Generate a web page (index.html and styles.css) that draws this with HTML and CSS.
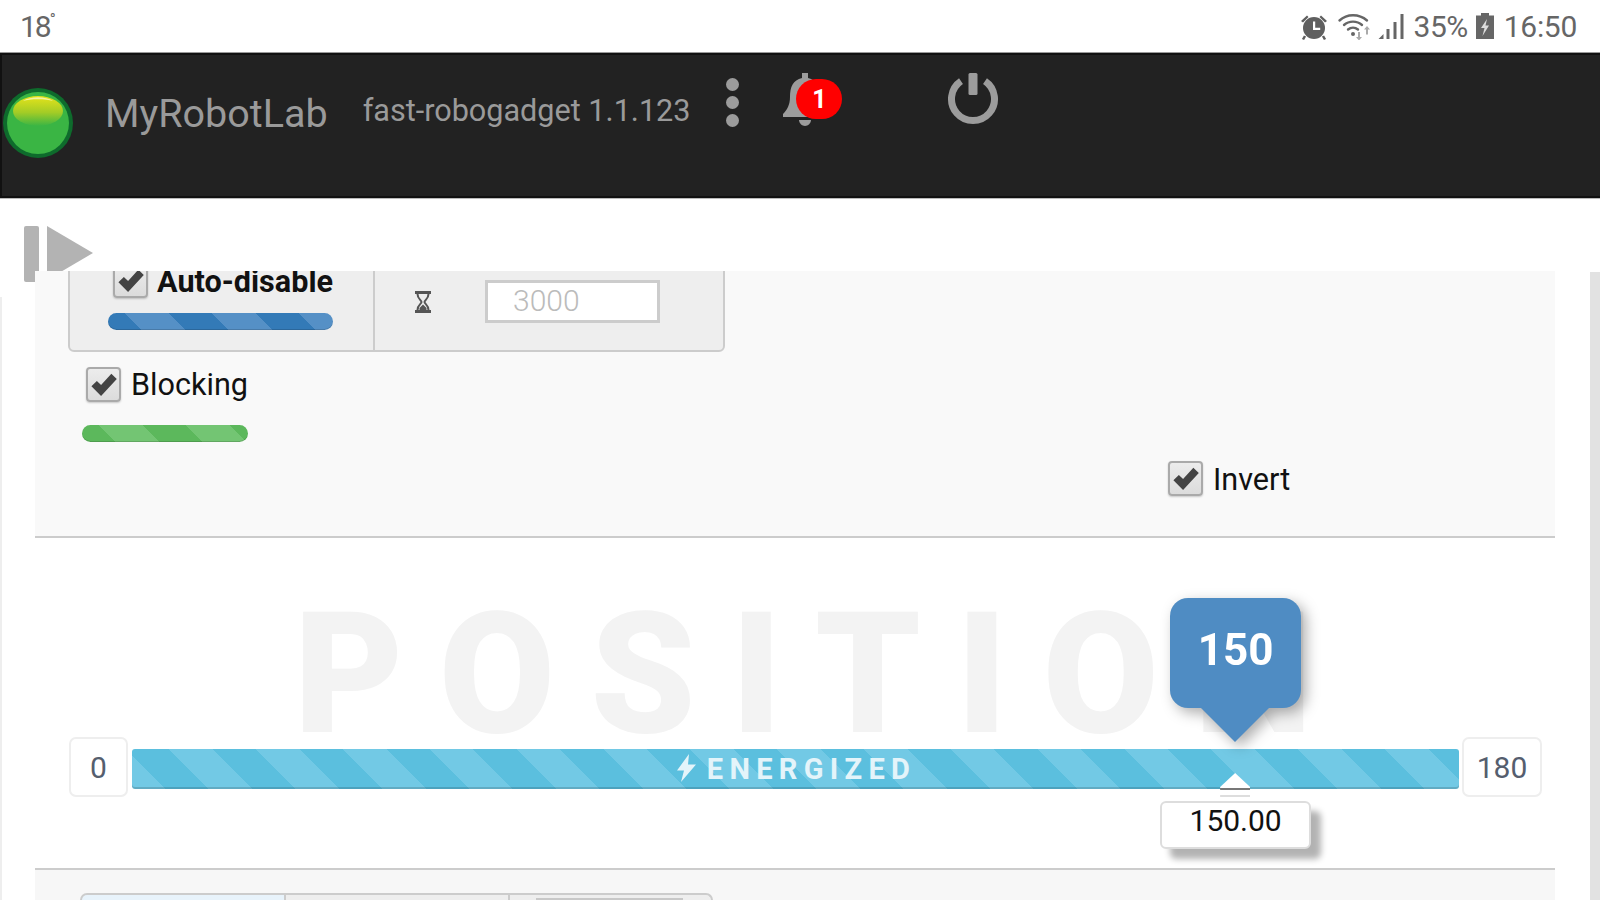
FILE: index.html
```html
<!DOCTYPE html>
<html lang="en">
<head>
<meta charset="utf-8">
<title>MyRobotLab</title>
<link rel="stylesheet" href="styles.css">
</head>
<body>
<div class="status-bar">
  <div class="temp">18<span class="deg">°</span></div>
  <div class="status-right">
    <svg class="ic-alarm" viewBox="0 0 28 28"><path d="M1 8 7 2.500 8.500 4 3 9.500zM27 8 21 2.500 19.500 4 25 9.500z" fill="#5f5f5f"/><circle cx="14" cy="15" r="11" fill="#5f5f5f"/><path d="M13 8.500h2.200v6.300h5v2.200H13z" fill="#fff"/><path d="M5 23 3 26.500M23 23l2 3.500" stroke="#5f5f5f" stroke-width="2.500"/></svg>
    <svg class="ic-wifi" viewBox="0 0 32 28"><g fill="none" stroke="#666" stroke-width="2.400" stroke-linecap="round"><path d="M1.500 8.500C9 1.500 21 1.500 29 8.500"/><path d="M6 13c5-4.500 13-4.500 18 0"/><path d="M10 17.500c3-2.500 7-2.500 10 0"/></g><circle cx="15" cy="22" r="2" fill="#666"/><path d="M20 20h2v5h2l-3 3.500-3-3.500h2zM29 14l3 3.500h-2v5h-2v-5h-2z" fill="#aaa"/></svg>
    <svg class="ic-signal" viewBox="0 0 27 27"><path d="M1 26 6 21v5zM9 26V16h3v10zM16 26V9h3v17zM23 26V1h3v25z" fill="#666"/></svg>
    <span class="pct">35%</span>
    <svg class="ic-batt" viewBox="0 0 18 26"><path d="M5 0h8v2.500h5V26H0V2.500h5z" fill="#666"/><path d="M11 6 5 15h3.500L6.500 23 13 12.500H9.500z" fill="#ddd"/></svg>
    <span class="clock">16:50</span>
  </div>
</div>

<header class="navbar">
  <svg class="led" viewBox="0 0 70 70">
    <defs>
      <linearGradient id="ledTop" x1="0" y1="0" x2="0" y2="1"><stop offset="0" stop-color="#e6e31a"/><stop offset=".55" stop-color="#a3cc26"/><stop offset="1" stop-color="#3ab544"/></linearGradient>
    </defs>
    <circle cx="35" cy="35" r="35" fill="#0e6b2c"/>
    <circle cx="35" cy="35" r="31" fill="#3ab544"/>
    <ellipse cx="35" cy="23" rx="25" ry="15" fill="url(#ledTop)"/>
    <path d="M20 13C27 8 43 8 50 13 43 10.500 27 10.500 20 13z" fill="#f3f2a0"/>
  </svg>
  <div class="brand">MyRobotLab</div>
  <div class="version">fast-robogadget 1.1.123</div>
  <div class="kebab"><i></i><i></i><i></i></div>
  <div class="bell-wrap">
    <svg class="bell" viewBox="0 0 44 53"><path d="M19 0h6v5c9 2 12 9 12 19 0 8 3 13 7 17v3H0v-3c4-4 7-9 7-17C7 14 10 7 19 5z" fill="#9c9c9c"/><path d="M16 47h12c0 3-3 6-6 6s-6-3-6-6z" fill="#9c9c9c"/></svg>
    <span class="badge">1</span>
  </div>
  <svg class="power" viewBox="0 0 52 52"><path d="M14 8.200A21.500 21.500 0 1 0 38 8.200" fill="none" stroke="#9c9c9c" stroke-width="7"/><rect x="21.500" y="0" width="9" height="22" rx="1.500" fill="#9c9c9c"/></svg>
</header>

<div class="toolbar">
  <svg class="play" viewBox="0 0 70 56"><rect x="0" y="0" width="15" height="56" rx="2" fill="#b3b3b3"/><path d="M23 0 69 27 23 54z" fill="#b3b3b3"/></svg>
</div>

<main class="workspace">
  <div class="left-rail"></div>
  <div class="panel">
    <section class="config">
      <div class="autodisable">
        <div class="auto-cell">
          <label class="check-row check-row-auto"><span class="check"><svg viewBox="0 0 24 24"><path d="M2 13.500 6.500 9 10 12.500 18.500 3 23 7.500 10 21.500z" fill="#444"/></svg></span><strong class="check-text">Auto-disable</strong></label>
          <div class="stripe stripe-blue"></div>
        </div>
        <div class="timer-cell">
          <svg class="hourglass" viewBox="0 0 16 22"><path d="M0 0h16v3H0zM0 19h16v3H0z" fill="#555"/><path d="M2.500 3c0 5 4 6 4 8s-4 3-4 8M13.500 3c0 5-4 6-4 8s4 3 4 8" fill="none" stroke="#555" stroke-width="2"/><path d="M4.500 17 8 13.500l3.500 3.500v2h-7z" fill="#555"/></svg>
          <div class="timer-input">3000</div>
        </div>
      </div>
      <label class="check-row check-row-blocking"><span class="check"><svg viewBox="0 0 24 24"><path d="M2 13.500 6.500 9 10 12.500 18.500 3 23 7.500 10 21.500z" fill="#444"/></svg></span><span class="check-text">Blocking</span></label>
      <div class="stripe stripe-green"></div>
      <label class="check-row check-row-invert"><span class="check"><svg viewBox="0 0 24 24"><path d="M2 13.500 6.500 9 10 12.500 18.500 3 23 7.500 10 21.500z" fill="#444"/></svg></span><span class="check-text">Invert</span></label>
    </section>

    <section class="position">
      <div class="watermark">POSITION</div>
      <div class="slider">
        <div class="limit limit-min">0</div>
        <div class="track">
          <div class="energized">
            <svg class="bolt" viewBox="0 0 19 28"><path d="M12 0 0 16.500h7L4 28 19 10.500h-8z" fill="#e4f4fa"/></svg>
            <span>ENERGIZED</span>
          </div>
          <div class="pointer" style="left:83.13%">
            <div class="bubble">150</div>
            <div class="thumb"></div>
            <div class="value">150.00</div>
          </div>
        </div>
        <div class="limit limit-max">180</div>
      </div>
    </section>

    <section class="tabs-area">
      <div class="tabs">
        <div class="tab tab-active"></div>
        <div class="tab tab-second"></div>
        <div class="tab tab-third"><div class="tab-inner"></div></div>
      </div>
    </section>
  </div>
  <div class="scrollbar"></div>
</main>
</body>
</html>
```
FILE: styles.css
```css
* { box-sizing: border-box; }
html, body { margin: 0; height: 900px; overflow: hidden; background: #fff; }
body { font-family: Roboto, "Liberation Sans", sans-serif; color: #111; width: 1600px; }

/* status bar */
.status-bar { height: 53px; display: flex; justify-content: space-between; align-items: flex-start; padding: 0 23px 0 20px; color: #666; }
.temp { font-size: 30px; line-height: 36px; margin-top: 2px; letter-spacing: -2px; }
.deg { font-size: 16px; vertical-align: 12px; }
.status-right { display: flex; align-items: flex-start; }
.ic-alarm { width: 28px; height: 28px; margin-top: 13px; }
.ic-wifi { width: 34px; height: 28px; margin: 12px 0 0 9px; }
.ic-signal { width: 28px; height: 27px; margin: 13px 0 0 6px; }
.pct { font-size: 30px; line-height: 36px; margin: 9px 0 0 9px; letter-spacing: -.5px; }
.ic-batt { width: 18px; height: 26px; margin: 13px 0 0 8px; }
.clock { font-size: 30px; line-height: 36px; margin: 9px 0 0 10px; letter-spacing: -.3px; }

/* navbar */
.navbar { height: 145px; background: #222; border: 2px solid #111; border-right: 0; box-shadow: 0 -1px #999, 0 1px #bbb; display: flex; align-items: flex-start; color: #9a9a9a; position: relative; }
.led { width: 70px; height: 70px; margin: 33px 0 0 1px; flex: none; }
.brand { font-size: 39.500px; line-height: 44px; margin: 37px 0 0 32px; }
.version { font-size: 30.600px; line-height: 36px; margin: 38px 0 0 35px; }
.kebab { display: flex; flex-direction: column; gap: 5px; margin: 23px 0 0 36px; }
.kebab i { display: block; width: 13px; height: 13px; border-radius: 50%; background: #9c9c9c; }
.bell-wrap { position: relative; width: 44px; height: 53px; margin: 18px 0 0 44px; }
.bell { display: block; width: 44px; height: 53px; }
.badge { position: absolute; left: 13px; top: 6px; width: 46px; height: 40px; border-radius: 20px / 20px; background: #f00; color: #fff; font-size: 25px; font-weight: 700; line-height: 42px; text-align: center; }
.power { width: 52px; height: 52px; margin: 18px 0 0 120px; }

/* toolbar */
.toolbar { height: 73px; position: relative; }
.play { position: absolute; left: 24px; top: 28px; width: 70px; height: 56px; }

/* layout */
.workspace { height: 629px; display: flex; overflow: hidden; }
.left-rail { width: 35px; flex: none; }
.left-rail::before { content: ""; display: block; width: 2px; height: 603px; margin-top: 26px; background: #eee; }
.panel { width: 1520px; flex: none; position: relative; }
.scrollbar { width: 10px; flex: none; margin: 1px 0 0 35px; background: #e2e2e2; }

/* config */
.config { height: 267px; background: #f9f9f9; border-bottom: 2px solid #ccc; overflow: hidden; }
.autodisable { display: flex; width: 657px; height: 101px; margin: -20px 0 0 33px; background: #eee; border: 2px solid #ccc; border-radius: 0 0 6px 6px; }
.auto-cell { width: 305px; flex: none; border-right: 2px solid #ccc; padding: 10px 0 0 38px; }
.check-row { display: flex; align-items: center; height: 35px; }
.check-row-auto { margin-left: 5px; }
.check { width: 35px; height: 35px; flex: none; display: flex; align-items: center; justify-content: center; border: 2px solid #aaa; border-radius: 4px; background: linear-gradient(#ececec, #dcdcdc); box-shadow: 0 1px 2px rgba(0,0,0,.2); }
.check svg { width: 29px; height: 29px; }
.check-text { font-size: 30.600px; line-height: 35px; margin-left: 10px; color: #111; position: relative; top: 1px; }
.check-row-blocking .check-text { top: 0; }
.check-row-invert .check-text { top: 1px; }
strong.check-text { font-weight: 700; margin-left: 9px; }
.stripe { height: 17px; border-radius: 9px; box-shadow: inset 0 -1px 0 rgba(0,0,0,.15); }
.stripe-blue { width: 225px; margin-top: 15px; background: repeating-linear-gradient(45deg, #337ab7 0 24px, #5590c6 24px 54.700px, #337ab7 54.700px 61.400px) #337ab7; }
.stripe-green { width: 166px; margin: 23px 0 0 47px; background: repeating-linear-gradient(45deg, #5cb85c 0 24px, #73c573 24px 54.700px, #5cb85c 54.700px 61.400px) #5cb85c; }
.timer-cell { flex: 1; position: relative; display: flex; align-items: flex-start; }
.hourglass { width: 16px; height: 22px; margin: 38px 0 0 40px; }
.timer-input { width: 175px; height: 43px; margin: 27px 0 0 54px; background: #fff; border: 3px solid #ccc; color: #bbb; font-size: 30px; font-weight: 300; line-height: 36px; padding-left: 25px; }
.check-row-blocking { margin: 15px 0 0 51px; }
.check-row-invert { margin: 19px 0 0 1133px; }

/* position */
.position { height: 332px; background: #fff; border-bottom: 2px solid #ccc; position: relative; }
.watermark { position: absolute; left: 259px; top: 42px; font-weight: 900; font-size: 168px; line-height: 190px; letter-spacing: 35.500px; color: #f3f3f3; white-space: nowrap; }
.slider { position: absolute; left: 34px; right: 13px; top: 199px; display: flex; align-items: flex-start; }
.limit { height: 60px; border: 2px solid #eee; border-radius: 7px; background: #fff; color: #555e6e; font-size: 30px; line-height: 58px; text-align: center; flex: none; }
.limit-min { width: 59px; }
.limit-max { width: 80px; }
.track { width: 1327px; height: 40px; margin: 12px 3px 0 4px; flex: none; position: relative; border-radius: 3px; box-shadow: inset 0 -2px 0 rgba(0,0,0,.15); background: repeating-linear-gradient(45deg, #72c9e5 0 23.700px, #5bbfde 23.700px 54.400px, #72c9e5 54.400px 61.400px) #5bbfde; }
.energized { display: flex; justify-content: center; align-items: center; gap: 11px; height: 40px; color: #e4f4fa; font-size: 29px; font-weight: 700; letter-spacing: 6.300px; padding-left: 2px; }
.bolt { width: 19px; height: 28px; margin-bottom: 3px; }
.pointer { position: absolute; top: 0; width: 0; }
.bubble { position: absolute; left: -65px; top: -151px; width: 131px; height: 110px; border-radius: 18px; background: #4f8cc3; color: #fff; font-size: 44px; font-weight: 700; line-height: 105px; text-align: center; filter: drop-shadow(5px 5px 7px rgba(0,0,0,.32)); }
.bubble::after { content: ""; position: absolute; left: 31px; top: 110px; border-left: 34px solid transparent; border-right: 34px solid transparent; border-top: 34px solid #4f8cc3; }
.thumb { position: absolute; left: -15px; top: 24px; width: 30px; height: 24px; background: linear-gradient(#fff 0 15px, #777 15px 17px, #fff 17px 22px, #ddd 22px); clip-path: polygon(50% 0, 100% 58%, 100% 100%, 0 100%, 0 58%); }
.value { position: absolute; left: -75px; top: 52px; width: 151px; height: 48px; background: #fff; border: 2px solid #ddd; border-radius: 6px; box-shadow: 10px 10px 6px rgba(0,0,0,.3); color: #111; font-size: 30px; line-height: 36px; text-align: center; }

/* tabs */
.tabs-area { height: 30px; background: #f7f7f7; padding: 23px 0 0 45px; }
.tabs { display: flex; }
.tab { height: 7px; border-top: 2px solid #ccc; border-right: 2px solid #ccc; background: #eee; }
.tab-active { width: 206px; background: #e8f3fb; border-left: 2px solid #ccc; border-radius: 7px 0 0 0; }
.tab-second { width: 224px; }
.tab-third { width: 203px; border-radius: 0 7px 0 0; padding: 3px 0 0 26px; }
.tab-inner { width: 147px; height: 2px; background: #c8c8c8; }
```
